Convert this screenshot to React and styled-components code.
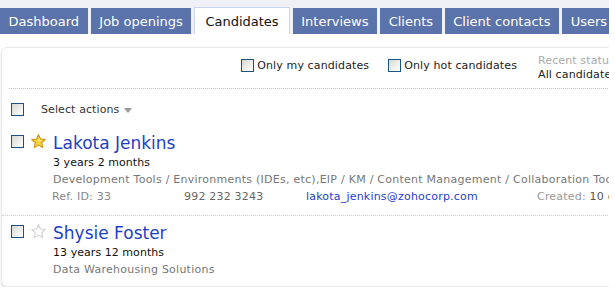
import React from "react";
import styled, { createGlobalStyle } from "styled-components";

const GlobalStyle = createGlobalStyle`
  html, body { margin: 0; padding: 0; background: #ffffff; }
  body { font-family: "DejaVu Sans", Verdana, sans-serif; color: #222; }
`;

const Page = styled.div`
  width: 609px;
  overflow: hidden;
`;

const TabBar = styled.nav`
  display: flex;
  gap: 3px;
  align-items: flex-end;
  height: 34px;
  box-sizing: border-box;
  background: #eff1f6;
  white-space: nowrap;
`;

const Tab = styled.div`
  flex: none;
  box-sizing: border-box;
  height: ${(p) => (p.$active ? "27px" : "26px")};
  line-height: 27px;
  padding: 0 ${(p) => (p.$active ? "10px" : "8.6px")};
  font-size: 13px;
  color: ${(p) => (p.$active ? "#111" : "#fff")};
  background: ${(p) => (p.$active ? "#fff" : "#5a73aa")};
  border: ${(p) => (p.$active ? "1px solid #c9d6ed" : "none")};
  border-bottom: none;
`;

const Panel = styled.section`
  margin: 13px 0 0 1px;
  width: 700px;
  height: 240px;
  box-sizing: border-box;
  border: 1px solid #e9e9e9;
  border-radius: 6px;
  box-shadow: 0 2px 2px rgba(0, 0, 0, 0.13);
  background: #fff;
  overflow: hidden;
`;

const FilterRow = styled.div`
  display: flex;
  justify-content: flex-end;
  align-items: flex-start;
  height: 41px;
  box-sizing: border-box;
  margin-left: 7px;
  padding: 6px 10px 0 0;
  border-bottom: 1px dotted #c4c4c4;
  font-size: 11px;
  letter-spacing: 0.12px;
`;

const Check = styled.label`
  display: flex;
  align-items: center;
  gap: 3px;
  margin: 5px ${(p) => p.$gap || 0}px 0 0;
  color: #222;
  line-height: 13px;
`;

const Box = styled.span`
  flex: none;
  display: block;
  width: 13px;
  height: 13px;
  box-sizing: border-box;
  border: 1px solid #1d5283;
  background: linear-gradient(135deg, #d8d8d2 0%, #f4f4f1 70%, #ffffff 100%);
`;

const Recent = styled.div`
  width: 152px;
  line-height: 14px;
  white-space: nowrap;
`;

const RecentLabel = styled.div`
  color: #aaa;
`;

const RecentValue = styled.div`
  color: #222;
`;

const ActionsRow = styled.div`
  display: flex;
  align-items: flex-start;
  padding: 14px 0 0 9px;
  height: 44px;
  box-sizing: border-box;
  font-size: 11px;
  line-height: 13px;
  color: #333;
`;

const ActionsLabel = styled.span`
  margin-left: 17px;
  display: flex;
  align-items: center;
  gap: 5px;
  letter-spacing: 0.1px;
`;

const Caret = styled.span`
  display: block;
  width: 0;
  height: 0;
  border-left: 4px solid transparent;
  border-right: 4px solid transparent;
  border-top: 5px solid #999;
  margin-top: 1px;
`;

const CandidateRow = styled.div`
  display: grid;
  grid-template-columns: 13px 15px 1fr;
  column-gap: 7px;
  padding: ${(p) => p.$top}px 0 ${(p) => p.$bottom}px 9px;
  border-bottom: ${(p) => (p.$last ? "none" : "1px dotted #d0d0d0")};
`;

const RowBox = styled(Box)`
  margin-top: 2px;
`;

const StarIcon = styled.svg`
  display: block;
  margin-top: 1px;
`;

const Info = styled.div`
  min-width: 0;
  white-space: nowrap;
`;

const Name = styled.a`
  display: block;
  font-size: 17px;
  line-height: 20px;
  color: #1f3fc6;
  text-decoration: none;
`;

const Line = styled.div`
  font-size: 11px;
  line-height: 17px;
  color: ${(p) => p.$color || "#111"};
  margin-top: ${(p) => p.$mt || 0}px;
  letter-spacing: ${(p) => (p.$wide ? "0.25px" : "0.05px")};
`;

const Meta = styled.div`
  display: grid;
  grid-template-columns: 132px 122px 231px auto;
  margin-left: -1px;
  font-size: 11px;
  line-height: 17px;
  letter-spacing: 0.2px;
`;

const MetaItem = styled.span`
  color: ${(p) => p.$color || "#888"};
`;

const Created = styled.span`
  color: #999;
`;

const CreatedValue = styled.span`
  color: #555;
`;

function Star({ filled }) {
  return (
    <StarIcon width="15" height="15" viewBox="0 0 14 14">
      <path
        d="M7 0.7 L8.85 4.75 L13.3 5.15 L9.95 8.1 L10.95 12.7 L7 10.35 L3.05 12.7 L4.05 8.1 L0.7 5.15 L5.15 4.75 Z"
        fill={filled ? "#f7cf3a" : "#fff"}
        stroke={filled ? "#c99512" : "#cfcfcf"}
        strokeWidth="1"
        strokeLinejoin="round"
      />
      {filled && (
        <path d="M7 2.6 L8.2 5.5 L11 5.8 L7 7.5 Z" fill="#fdf0a8" opacity="0.8" />
      )}
    </StarIcon>
  );
}

const tabs = [
  "Dashboard",
  "Job openings",
  "Candidates",
  "Interviews",
  "Clients",
  "Client contacts",
  "Users",
];

export default function App() {
  return (
    <Page>
      <GlobalStyle />
      <TabBar>
        {tabs.map((t) => (
          <Tab key={t} $active={t === "Candidates"}>
            {t}
          </Tab>
        ))}
      </TabBar>
      <Panel>
        <FilterRow>
          <Check $gap={19}>
            <Box />
            Only my candidates
          </Check>
          <Check $gap={21}>
            <Box />
            Only hot candidates
          </Check>
          <Recent>
            <RecentLabel>Recent status</RecentLabel>
            <RecentValue>All candidates</RecentValue>
          </Recent>
        </FilterRow>
        <ActionsRow>
          <Box />
          <ActionsLabel>
            Select actions
            <Caret />
          </ActionsLabel>
        </ActionsRow>
        <CandidateRow $top={0} $bottom={10}>
          <RowBox />
          <Star filled />
          <Info>
            <Name href="#">Lakota Jenkins</Name>
            <Line $mt={1}>3 years 2 months</Line>
            <Line $color="#777" $wide>
              Development Tools / Environments (IDEs, etc),EIP / KM / Content Management / Collaboration Tools
            </Line>
            <Meta>
              <MetaItem>Ref. ID: 33</MetaItem>
              <MetaItem $color="#666">992 232 3243</MetaItem>
              <MetaItem $color="#1f3fc6">lakota_jenkins@zohocorp.com</MetaItem>
              <span>
                <Created>Created: </Created>
                <CreatedValue>10 days ago</CreatedValue>
              </span>
            </Meta>
          </Info>
        </CandidateRow>
        <CandidateRow $top={7} $bottom={8} $last>
          <RowBox />
          <Star />
          <Info>
            <Name href="#">Shysie Foster</Name>
            <Line $mt={1}>13 years 12 months</Line>
            <Line $color="#777" $wide>Data Warehousing Solutions</Line>
          </Info>
        </CandidateRow>
      </Panel>
    </Page>
  );
}
